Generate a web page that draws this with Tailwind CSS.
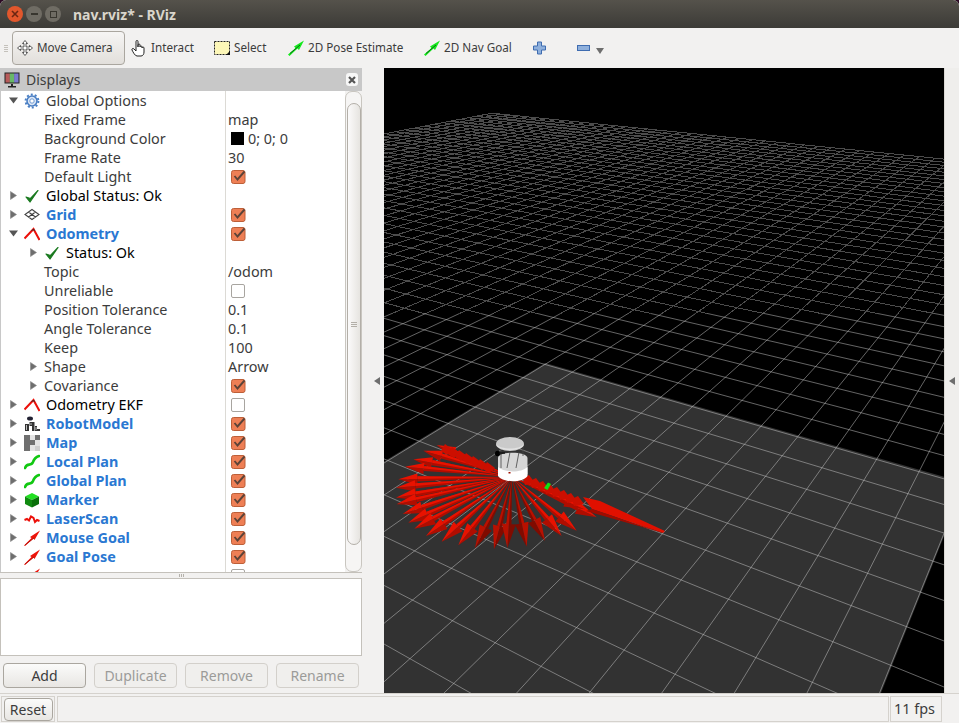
<!DOCTYPE html>
<html lang="en">

<head>
    <meta charset="UTF-8">
    <title>nav.rviz* - RViz</title>
    <script src="https://cdn.jsdelivr.net/npm/@tailwindcss/browser@4"></script>
</head>

<body class="bg-[#2c0a24] h-[723px] w-[959px] overflow-hidden font-['Noto_Sans',sans-serif] text-[14px] text-[#3c3c3c]">
    <!-- shared icons -->
    <svg class="hidden">
        <symbol id="i-right" viewBox="0 0 9 9"><path d="M1.5 0.5 L7.5 4.5 L1.5 8.5 Z" fill="#6e6e6e" stroke="#8a8a8a" stroke-width="0.6"/></symbol>
        <symbol id="i-down" viewBox="0 0 9 9"><path d="M0 1.5 L9 1.5 L4.5 7.5 Z" fill="#555"/></symbol>
        <symbol id="i-check" viewBox="0 0 16 16"><path d="M2 9 L6 14 L14 2.5 L6.5 10.5 Z" fill="#1b7a20" stroke="#1b7a20" stroke-width="1.2" stroke-linejoin="round"/></symbol>
        <symbol id="i-gear" viewBox="0 0 16 16"><circle cx="8" cy="8" r="5" fill="#dbe6f5" stroke="#4a7fc4" stroke-width="1.6"/><circle cx="8" cy="8" r="6.4" fill="none" stroke="#4a7fc4" stroke-width="2" stroke-dasharray="2 2.02"/><circle cx="8" cy="8" r="2.2" fill="#fff" stroke="#6d9ad4"/></symbol>
        <symbol id="i-grid" viewBox="0 0 16 16"><path d="M8 2.5 L15 7.5 L8 12.5 L1 7.5 Z M4.5 5 L11.5 10 M11.5 5 L4.5 10" fill="none" stroke="#444" stroke-width="1.1"/></symbol>
        <symbol id="i-odom" viewBox="0 0 16 16"><path d="M0.5 12.5 L9.5 3 L15.5 14" fill="none" stroke="#ec100a" stroke-width="2"/><path d="M7.5 5 L9.5 3 L10.5 5" fill="none" stroke="#333" stroke-width="1"/></symbol>
        <symbol id="i-robot" viewBox="0 0 16 16"><ellipse cx="6" cy="2.5" rx="3" ry="2" fill="#223"/><path d="M1 8 H5 V15 H1 Z M5.5 6 H10.5 V15 H8 V10 H5.5 Z M11 10 H13 V13 H16 V15 H11 Z" fill="#333"/><path d="M2.5 9 V14 M12 11 V14 M7 7 V9" stroke="#ccc" stroke-width="0.9"/></symbol>
        <symbol id="i-map" viewBox="0 0 16 16"><rect width="16" height="16" fill="#e4e4e4"/><path d="M0 0 H6 V5 H11 V0 H16 V5 H11 V10 H6 V16 H0 Z" fill="#707070"/><path d="M11 11 H16 V16 H11 Z" fill="#cfcfcf"/></symbol>
        <symbol id="i-path" viewBox="0 0 16 16"><path d="M1 14 C3 8 7 13 9 8 C10 5 12 3 15 2" fill="none" stroke="#12c812" stroke-width="2.6" stroke-linecap="round"/></symbol>
        <symbol id="i-cube" viewBox="0 0 16 16"><path d="M8 1 L15 4.5 L8 8 L1 4.5 Z" fill="#22e022"/><path d="M1 4.5 L8 8 L8 15.5 L1 12 Z" fill="#108a10"/><path d="M15 4.5 L8 8 L8 15.5 L15 12 Z" fill="#0a700a"/></symbol>
        <symbol id="i-laser" viewBox="0 0 16 16"><path d="M0.5 9 L3 8 L5 9.5 L7 5.5 L9.5 7 L11 11 L13 9 L15.5 10" fill="none" stroke="#ec100a" stroke-width="2"/></symbol>
        <symbol id="i-pose" viewBox="0 0 16 16"><path d="M0 15.5 L7.5 8 L6 7 L16 0.5 L10.5 10 L9.5 8.5 L1 16 Z" fill="#ec140a"/><path d="M1 15 L10 8" stroke="#a80c06" stroke-width="0.8"/></symbol>
        <symbol id="i-green" viewBox="0 0 16 16"><path d="M0 14.5 L7.5 8 L6 6.5 L16 0.5 L11 10 L9.5 8.5 L1.5 16 Z" fill="#14e81c"/><path d="M2 13.5 L12 5" stroke="#0a5a12" stroke-width="0.9"/></symbol>
        <symbol id="i-box-on" viewBox="0 0 15 15"><rect x="0.5" y="1.5" width="13.5" height="13" rx="2" fill="#ee7f55" stroke="#bd5f38"/><path d="M3.5 7 L6.5 10.5 L13.5 2.5" fill="none" stroke="#5c4338" stroke-width="1.9"/></symbol>
    </svg>

    <div class="flex h-full w-full flex-col overflow-hidden rounded-t-[6px] bg-[#f2f1f0]">
        <!-- Title bar -->
        <div class="flex h-[28px] shrink-0 items-center bg-gradient-to-b from-[#55524b] to-[#3c3b37]">
            <div class="ml-[7px] flex w-[66px] items-center gap-[3px]">
                <span class="flex h-[16px] w-[16px] items-center justify-center rounded-full bg-[#e2572c] text-[#5a2010]">
                    <svg class="h-[8px] w-[8px]" viewBox="0 0 8 8"><path d="M1 1 L7 7 M7 1 L1 7" stroke="#6b2612" stroke-width="1.6"/></svg>
                </span>
                <span class="flex h-[16px] w-[16px] items-center justify-center rounded-full bg-[#6f6c64]"><span class="h-[2px] w-[7px] bg-[#38362f]"></span></span>
                <span class="flex h-[16px] w-[16px] items-center justify-center rounded-full bg-[#6f6c64]"><span class="h-[7px] w-[7px] border border-[#38362f]"></span></span>
            </div>
            <span class="text-[14px] font-bold text-[#d9d5cb]">nav.rviz* - RViz</span>
        </div>

        <!-- Toolbar -->
        <div class="flex h-[40px] shrink-0 items-center pl-[4px] text-[11.7px]">
            <span class="mr-[4px] flex w-[4px] flex-col gap-[1px]">
                <span class="h-[1px] bg-[#c4c1bb]"></span><span class="h-[1px] bg-[#c4c1bb]"></span><span class="h-[1px] bg-[#c4c1bb]"></span><span class="h-[1px] bg-[#c4c1bb]"></span>
            </span>
            <div class="flex h-[34px] w-[113px] items-center rounded-[4px] border border-[#aaa69f] bg-gradient-to-b from-[#f6f5f4] to-[#e2dfdb] pl-[4px]">
                <svg class="h-[16px] w-[16px]" viewBox="0 0 16 16"><path d="M8 0.5 L10.5 3.5 H9 V7 H12.5 V5.5 L15.5 8 L12.5 10.5 V9 H9 V12.5 H10.5 L8 15.5 L5.5 12.5 H7 V9 H3.5 V10.5 L0.5 8 L3.5 5.5 V7 H7 V3.5 H5.5 Z" fill="#fff" stroke="#333" stroke-width="0.8"/></svg>
                <span class="ml-[4px]">Move Camera</span>
            </div>
            <svg class="ml-[6px] h-[18px] w-[16px]" viewBox="0 0 16 18"><path d="M5 10 V2.5 a1 1 0 0 1 2 0 V8 V6 a1 1 0 0 1 2 0 V8 a1 1 0 0 1 2 0 V9 a1 1 0 0 1 2 0 V13 C13 15 12 17 10 17 H6 C4 17 2 13 1 11 C0.5 9.5 2 9 3 10 L5 12 Z" fill="#fff" stroke="#222" stroke-width="1"/></svg>
            <span class="ml-[4px] w-[63px]">Interact</span>
            <svg class="h-[14px] w-[16px]" viewBox="0 0 16 14"><rect x="0.5" y="0.5" width="15" height="13" fill="#fdf7b8" stroke="#222" stroke-dasharray="2 1"/><path d="M12 14 H16 V10 Z" fill="#111"/></svg>
            <span class="ml-[4px] w-[54px]">Select</span>
            <svg class="h-[16px] w-[16px]"><use href="#i-green"/></svg>
            <span class="ml-[4px] w-[116px]">2D Pose Estimate</span>
            <svg class="h-[16px] w-[16px]"><use href="#i-green"/></svg>
            <span class="ml-[4px] w-[89px]">2D Nav Goal</span>
            <svg class="h-[14px] w-[13px]" viewBox="0 0 13 14"><path d="M4.5 1 H8.5 V5 H12.5 V9 H8.5 V13 H4.5 V9 H0.5 V5 H4.5 Z" fill="#8fb0dc" stroke="#3f6cb0"/></svg>
            <svg class="ml-[31px] h-[6px] w-[13px]" viewBox="0 0 13 6"><rect x="0.5" y="0.5" width="12" height="5" fill="#8fb0dc" stroke="#3f6cb0"/></svg>
            <svg class="ml-[6px] mt-[6px] h-[6px] w-[8px]" viewBox="0 0 8 6"><path d="M0 0 H8 L4 6 Z" fill="#6e6e6e"/></svg>
        </div>

        <!-- Main area -->
        <div class="flex h-[625px] shrink-0">
            <!-- Left dock -->
            <div class="flex w-[362px] shrink-0 flex-col">
                <div class="flex h-[23px] shrink-0 items-center justify-between bg-[#c8c8c8] pl-[4px] pr-[4px]">
                    <div class="flex items-center">
                        <svg class="h-[16px] w-[16px]" viewBox="0 0 16 16">
                            <rect x="0.5" y="0.5" width="15" height="11" fill="#222"/>
                            <rect x="1.5" y="1.5" width="4.4" height="9" fill="#b85a5a"/><rect x="5.8" y="1.5" width="4.4" height="9" fill="#68b868"/><rect x="10.1" y="1.5" width="4.4" height="9" fill="#7a7ad0"/>
                            <path d="M7 12 H9 V14 H12 V15.5 H4 V14 H7 Z" fill="#222"/>
                        </svg>
                        <span class="ml-[6px] text-[14px]">Displays</span>
                    </div>
                    <span class="flex h-[13px] w-[12px] items-center justify-center rounded-[3px] bg-[#f7f7f7]">
                        <svg class="h-[8px] w-[8px]" viewBox="0 0 8 8"><path d="M1 1 L7 7 M7 1 L1 7" stroke="#555" stroke-width="2.2"/></svg>
                    </span>
                </div>

                <div class="flex h-[481px] shrink-0 border-l border-[#c8c8c8]">
                    <div class="h-full w-[344px] shrink-0 overflow-hidden bg-white text-[14.4px] leading-[18px]" id="tree">
                        <div class="flex h-[19px] items-center"><div class="flex h-full w-[224px] shrink-0 items-center pl-[8px]"><svg class="h-[9px] w-[9px]"><use href="#i-down"/></svg><svg class="ml-[6px] h-[16px] w-[16px]"><use href="#i-gear"/></svg><span class="ml-[6px]">Global Options</span></div><div class="h-full grow border-l border-[#dcdad5]"></div></div>
                        <div class="flex h-[19px] items-center"><div class="flex h-full w-[224px] shrink-0 items-center pl-[43px]">Fixed Frame</div><div class="flex h-full grow items-center border-l border-[#dcdad5] pl-[2px]">map</div></div>
                        <div class="flex h-[19px] items-center"><div class="flex h-full w-[224px] shrink-0 items-center pl-[43px]">Background Color</div><div class="flex h-full grow items-center border-l border-[#dcdad5] pl-[5px]"><span class="h-[13px] w-[13px] bg-black"></span><span class="ml-[4px]">0; 0; 0</span></div></div>
                        <div class="flex h-[19px] items-center"><div class="flex h-full w-[224px] shrink-0 items-center pl-[43px]">Frame Rate</div><div class="flex h-full grow items-center border-l border-[#dcdad5] pl-[2px]">30</div></div>
                        <div class="flex h-[19px] items-center"><div class="flex h-full w-[224px] shrink-0 items-center pl-[43px]">Default Light</div><div class="flex h-full grow items-center border-l border-[#dcdad5] pl-[5px]"><svg class="h-[15px] w-[15px]"><use href="#i-box-on"/></svg></div></div>
                        <div class="flex h-[19px] items-center"><div class="flex h-full w-[224px] shrink-0 items-center pl-[8px] text-black"><svg class="h-[9px] w-[9px]"><use href="#i-right"/></svg><svg class="ml-[6px] h-[16px] w-[16px]"><use href="#i-check"/></svg><span class="ml-[6px]">Global Status: Ok</span></div><div class="h-full grow border-l border-[#dcdad5]"></div></div>
                        <div class="flex h-[19px] items-center"><div class="flex h-full w-[224px] shrink-0 items-center pl-[8px] font-bold text-[#2a78d2]"><svg class="h-[9px] w-[9px]"><use href="#i-right"/></svg><svg class="ml-[6px] h-[16px] w-[16px]"><use href="#i-grid"/></svg><span class="ml-[6px]">Grid</span></div><div class="flex h-full grow items-center border-l border-[#dcdad5] pl-[5px]"><svg class="h-[15px] w-[15px]"><use href="#i-box-on"/></svg></div></div>
                        <div class="flex h-[19px] items-center"><div class="flex h-full w-[224px] shrink-0 items-center pl-[8px] font-bold text-[#2a78d2]"><svg class="h-[9px] w-[9px]"><use href="#i-down"/></svg><svg class="ml-[6px] h-[16px] w-[16px]"><use href="#i-odom"/></svg><span class="ml-[6px]">Odometry</span></div><div class="flex h-full grow items-center border-l border-[#dcdad5] pl-[5px]"><svg class="h-[15px] w-[15px]"><use href="#i-box-on"/></svg></div></div>
                        <div class="flex h-[19px] items-center"><div class="flex h-full w-[224px] shrink-0 items-center pl-[28px] text-black"><svg class="h-[9px] w-[9px]"><use href="#i-right"/></svg><svg class="ml-[6px] h-[16px] w-[16px]"><use href="#i-check"/></svg><span class="ml-[6px]">Status: Ok</span></div><div class="h-full grow border-l border-[#dcdad5]"></div></div>
                        <div class="flex h-[19px] items-center"><div class="flex h-full w-[224px] shrink-0 items-center pl-[43px]">Topic</div><div class="flex h-full grow items-center border-l border-[#dcdad5] pl-[2px]">/odom</div></div>
                        <div class="flex h-[19px] items-center"><div class="flex h-full w-[224px] shrink-0 items-center pl-[43px]">Unreliable</div><div class="flex h-full grow items-center border-l border-[#dcdad5] pl-[5px]"><span class="h-[14px] w-[14px] rounded-[2px] border border-[#a8a5a0] bg-white"></span></div></div>
                        <div class="flex h-[19px] items-center"><div class="flex h-full w-[224px] shrink-0 items-center pl-[43px]">Position Tolerance</div><div class="flex h-full grow items-center border-l border-[#dcdad5] pl-[2px]">0.1</div></div>
                        <div class="flex h-[19px] items-center"><div class="flex h-full w-[224px] shrink-0 items-center pl-[43px]">Angle Tolerance</div><div class="flex h-full grow items-center border-l border-[#dcdad5] pl-[2px]">0.1</div></div>
                        <div class="flex h-[19px] items-center"><div class="flex h-full w-[224px] shrink-0 items-center pl-[43px]">Keep</div><div class="flex h-full grow items-center border-l border-[#dcdad5] pl-[2px]">100</div></div>
                        <div class="flex h-[19px] items-center"><div class="flex h-full w-[224px] shrink-0 items-center pl-[28px]"><svg class="h-[9px] w-[9px]"><use href="#i-right"/></svg><span class="ml-[6px]">Shape</span></div><div class="flex h-full grow items-center border-l border-[#dcdad5] pl-[2px]">Arrow</div></div>
                        <div class="flex h-[19px] items-center"><div class="flex h-full w-[224px] shrink-0 items-center pl-[28px]"><svg class="h-[9px] w-[9px]"><use href="#i-right"/></svg><span class="ml-[6px]">Covariance</span></div><div class="flex h-full grow items-center border-l border-[#dcdad5] pl-[5px]"><svg class="h-[15px] w-[15px]"><use href="#i-box-on"/></svg></div></div>
                        <div class="flex h-[19px] items-center"><div class="flex h-full w-[224px] shrink-0 items-center pl-[8px] text-black"><svg class="h-[9px] w-[9px]"><use href="#i-right"/></svg><svg class="ml-[6px] h-[16px] w-[16px]"><use href="#i-odom"/></svg><span class="ml-[6px]">Odometry EKF</span></div><div class="flex h-full grow items-center border-l border-[#dcdad5] pl-[5px]"><span class="h-[14px] w-[14px] rounded-[2px] border border-[#a8a5a0] bg-white"></span></div></div>
                        <div class="flex h-[19px] items-center"><div class="flex h-full w-[224px] shrink-0 items-center pl-[8px] font-bold text-[#2a78d2]"><svg class="h-[9px] w-[9px]"><use href="#i-right"/></svg><svg class="ml-[6px] h-[16px] w-[16px]"><use href="#i-robot"/></svg><span class="ml-[6px]">RobotModel</span></div><div class="flex h-full grow items-center border-l border-[#dcdad5] pl-[5px]"><svg class="h-[15px] w-[15px]"><use href="#i-box-on"/></svg></div></div>
                        <div class="flex h-[19px] items-center"><div class="flex h-full w-[224px] shrink-0 items-center pl-[8px] font-bold text-[#2a78d2]"><svg class="h-[9px] w-[9px]"><use href="#i-right"/></svg><svg class="ml-[6px] h-[16px] w-[16px]"><use href="#i-map"/></svg><span class="ml-[6px]">Map</span></div><div class="flex h-full grow items-center border-l border-[#dcdad5] pl-[5px]"><svg class="h-[15px] w-[15px]"><use href="#i-box-on"/></svg></div></div>
                        <div class="flex h-[19px] items-center"><div class="flex h-full w-[224px] shrink-0 items-center pl-[8px] font-bold text-[#2a78d2]"><svg class="h-[9px] w-[9px]"><use href="#i-right"/></svg><svg class="ml-[6px] h-[16px] w-[16px]"><use href="#i-path"/></svg><span class="ml-[6px]">Local Plan</span></div><div class="flex h-full grow items-center border-l border-[#dcdad5] pl-[5px]"><svg class="h-[15px] w-[15px]"><use href="#i-box-on"/></svg></div></div>
                        <div class="flex h-[19px] items-center"><div class="flex h-full w-[224px] shrink-0 items-center pl-[8px] font-bold text-[#2a78d2]"><svg class="h-[9px] w-[9px]"><use href="#i-right"/></svg><svg class="ml-[6px] h-[16px] w-[16px]"><use href="#i-path"/></svg><span class="ml-[6px]">Global Plan</span></div><div class="flex h-full grow items-center border-l border-[#dcdad5] pl-[5px]"><svg class="h-[15px] w-[15px]"><use href="#i-box-on"/></svg></div></div>
                        <div class="flex h-[19px] items-center"><div class="flex h-full w-[224px] shrink-0 items-center pl-[8px] font-bold text-[#2a78d2]"><svg class="h-[9px] w-[9px]"><use href="#i-right"/></svg><svg class="ml-[6px] h-[16px] w-[16px]"><use href="#i-cube"/></svg><span class="ml-[6px]">Marker</span></div><div class="flex h-full grow items-center border-l border-[#dcdad5] pl-[5px]"><svg class="h-[15px] w-[15px]"><use href="#i-box-on"/></svg></div></div>
                        <div class="flex h-[19px] items-center"><div class="flex h-full w-[224px] shrink-0 items-center pl-[8px] font-bold text-[#2a78d2]"><svg class="h-[9px] w-[9px]"><use href="#i-right"/></svg><svg class="ml-[6px] h-[16px] w-[16px]"><use href="#i-laser"/></svg><span class="ml-[6px]">LaserScan</span></div><div class="flex h-full grow items-center border-l border-[#dcdad5] pl-[5px]"><svg class="h-[15px] w-[15px]"><use href="#i-box-on"/></svg></div></div>
                        <div class="flex h-[19px] items-center"><div class="flex h-full w-[224px] shrink-0 items-center pl-[8px] font-bold text-[#2a78d2]"><svg class="h-[9px] w-[9px]"><use href="#i-right"/></svg><svg class="ml-[6px] h-[16px] w-[16px]"><use href="#i-pose"/></svg><span class="ml-[6px]">Mouse Goal</span></div><div class="flex h-full grow items-center border-l border-[#dcdad5] pl-[5px]"><svg class="h-[15px] w-[15px]"><use href="#i-box-on"/></svg></div></div>
                        <div class="flex h-[19px] items-center"><div class="flex h-full w-[224px] shrink-0 items-center pl-[8px] font-bold text-[#2a78d2]"><svg class="h-[9px] w-[9px]"><use href="#i-right"/></svg><svg class="ml-[6px] h-[16px] w-[16px]"><use href="#i-pose"/></svg><span class="ml-[6px]">Goal Pose</span></div><div class="flex h-full grow items-center border-l border-[#dcdad5] pl-[5px]"><svg class="h-[15px] w-[15px]"><use href="#i-box-on"/></svg></div></div>
                        <div class="flex h-[19px] items-start"><div class="flex h-full w-[224px] shrink-0 items-center pl-[23px]"><svg class="h-[16px] w-[16px]"><use href="#i-pose"/></svg></div><div class="flex h-full grow items-center border-l border-[#dcdad5] pl-[5px]"><span class="h-[14px] w-[14px] rounded-[2px] border border-[#a8a5a0] bg-white"></span></div></div>
                    </div>
                    <!-- Scrollbar -->
                    <div class="flex h-full w-[17px] shrink-0 flex-col items-center rounded-[7px] border border-[#c9c6c0] bg-[#f6f5f4] pt-[11px]">
                        <div class="flex h-[442px] w-[14px] items-center justify-center rounded-[7px] border border-[#b3afa8] bg-gradient-to-r from-[#fbfafa] to-[#e6e4e0]">
                            <span class="flex flex-col gap-[1px]"><span class="h-[1px] w-[6px] bg-[#b3afa8]"></span><span class="h-[1px] w-[6px] bg-[#b3afa8]"></span><span class="h-[1px] w-[6px] bg-[#b3afa8]"></span></span>
                        </div>
                    </div>
                </div>

                <!-- Splitter handle -->
                <div class="flex h-[6px] shrink-0 items-center justify-center gap-[1px] border-t border-[#c4c1bb]">
                    <span class="h-[3px] w-[1px] bg-[#b5b2ac]"></span><span class="h-[3px] w-[1px] bg-[#b5b2ac]"></span><span class="h-[3px] w-[1px] bg-[#b5b2ac]"></span>
                </div>
                <div class="h-[78px] w-[362px] shrink-0 border border-[#c4c1bb] bg-white"></div>

                <!-- Buttons -->
                <div class="flex gap-[8px] pl-[3px] pt-[7px]">
                    <button class="h-[25px] w-[83px] rounded-[4px] border border-[#aaa69f] bg-gradient-to-b from-[#fbfbfa] to-[#e8e6e3]">Add</button>
                    <button class="h-[25px] w-[83px] rounded-[4px] border border-[#d3d0cb] bg-[#f0efed] text-[#9b9b99]">Duplicate</button>
                    <button class="h-[25px] w-[83px] rounded-[4px] border border-[#d3d0cb] bg-[#f0efed] text-[#9b9b99]">Remove</button>
                    <button class="h-[25px] w-[83px] rounded-[4px] border border-[#d3d0cb] bg-[#f0efed] text-[#9b9b99]">Rename</button>
                </div>
            </div>

            <!-- Collapse strip -->
            <div class="flex w-[22px] shrink-0 items-center justify-center pl-[8px]">
                <svg class="h-[8px] w-[6px]" viewBox="0 0 6 8"><path d="M6 0 V8 L0 4 Z" fill="#6e6e6e"/></svg>
            </div>

            <!-- 3D view -->
            <div class="relative h-full w-[560px] shrink-0 overflow-hidden bg-black">
                <svg class="absolute inset-0 h-full w-full" viewBox="384 68 560 625">
                    <polygon id="mapPlane" fill="#323232"/>
                    <path id="gridNear" fill="none" stroke="#c8c8c8" stroke-opacity="0.5" stroke-width="1"/>
                    <path id="gridFar" fill="none" stroke="#989898" stroke-opacity="0.5" stroke-width="1" shape-rendering="crispEdges"/>
                    <g id="fan"></g>
                    <!-- robot -->
                    <path d="M498 458 C498 451 527 451 527.5 458 V474 C523 482 503 482 498 474 Z" fill="#d6d6d6"/>
                    <path d="M498 467 C505 473 521 473 527.5 467 V476 C523 483 503 483 498 476 Z" fill="#fff"/>
                    <path d="M501 444 V468 M523 446 V456 M510 452 L507 468 M519 452 L516 468" stroke="#444" stroke-width="0.8" fill="none"/>
                    <ellipse cx="497.5" cy="453.5" rx="2.5" ry="2.8" fill="#000"/>
                    <path d="M499 453 H505" stroke="#111" stroke-width="1.4"/>
                    <ellipse cx="510" cy="444" rx="14" ry="7" fill="#cacaca"/>
                    <path d="M496 444 C498 452 522 452 524 444 C520 450 500 450 496 444 Z" fill="#e2e2e2"/>
                    <rect x="508.5" y="472" width="2" height="1.5" fill="#a01000"/>
                    <!-- marker -->
                    <path d="M544 488 L548 482.5 L551 484 L547.5 490 Z" fill="#12e012"/>
                </svg>
            </div>

            <!-- Right strip -->
            <div class="flex w-[15px] shrink-0 items-center justify-center border-l border-[#dbd9d4] bg-[#efeeec]">
                <svg class="h-[8px] w-[6px]" viewBox="0 0 6 8"><path d="M6 0 V8 L0 4 Z" fill="#6e6e6e"/></svg>
            </div>
        </div>

        <!-- Status bar -->
        <div class="flex h-[30px] shrink-0 items-stretch border-t border-[#d5d2cd] pt-[2px] pl-[1px]">
            <div class="flex h-[26px] w-[54px] items-center justify-center border border-[#d5d2cd]">
                <button class="h-[23px] w-[49px] rounded-[4px] border border-[#aaa69f] bg-gradient-to-b from-[#fbfbfa] to-[#e8e6e3]">Reset</button>
            </div>
            <div class="ml-[2px] h-[26px] w-[832px] border border-[#d5d2cd]"></div>
            <div class="ml-[1px] flex h-[26px] w-[52px] items-center border border-[#d5d2cd] pl-[3px] text-[14.4px]">11 fps</div>
        </div>
    </div>

    <script>
        // ground plane to screen, fitted to the grid in the view
        const G = -0.03462, H = 0.05821, W_SPLIT = 2.0;
        function project(i, j) {
            const w = 1 + G * i + H * j;
            return [(495.2 + 27.07 * i + 67.87 * j) / w, (642.7 + 0.5539 * i - 0.931 * j) / w];
        }
        const fmt = p => p[0].toFixed(1) + ' ' + p[1].toFixed(1);
        const seg = (a, b) => 'M' + fmt(a) + 'L' + fmt(b);

        // far part of the grid is drawn aliased like the GL view, near part smooth
        let near = '', far = '';
        for (let i = -41; i <= 59; i++) {
            const jMin = Math.max(-54, (0.3 - 1 - G * i) / H);
            const jCut = Math.min(46, Math.max(jMin, (W_SPLIT - 1 - G * i) / H));
            if (jCut > jMin) near += seg(project(i, jMin), project(i, jCut));
            if (jCut < 46) far += seg(project(i, jCut), project(i, 46));
        }
        for (let j = -54; j <= 46; j++) {
            const iMax = Math.min(59, (0.3 - 1 - H * j) / G);
            const iCut = Math.max(-41, Math.min(iMax, (W_SPLIT - 1 - H * j) / G));
            if (iCut < iMax) near += seg(project(iCut, j), project(iMax, j));
            if (iCut > -41) far += seg(project(-41, j), project(iCut, j));
        }
        document.getElementById('gridNear').setAttribute('d', near);
        document.getElementById('gridFar').setAttribute('d', far);

        const plane = [[-6.05, 9.08], [6.02, 9.08], [6.02, -8], [-6.05, -8]];
        document.getElementById('mapPlane').setAttribute('points', plane.map(c => project(c[0], c[1]).join(',')).join(' '));

        // laser arrows, tips in px relative to the fan corner
        const tips = [[170, 75], [130, 92], [100, 118], [75, 140], [55, 178], [48, 203], [48, 233], [50, 253], [68, 282], [85, 308],
            [103, 326], [138, 348], [185, 365], [235, 376], [285, 385], [342, 388], [382, 384], [440, 380], [495, 363], [545, 348], [590, 332], [650, 292], [615, 268]];
        const ox = 512, oy = 477;
        let fan = '';
        tips.forEach(t => {
            const tx = 380 + t[0] / 3, ty = 420 + t[1] / 3;
            const len = Math.hypot(tx - ox, ty - oy), dx = (tx - ox) / len, dy = (ty - oy) / len;
            let nx = -dy, ny = dx;
            if (ny > 0 || (ny === 0 && nx < 0)) { nx = -nx; ny = -ny; }
            const hl = 19 + 5 * Math.max(dy, 0), hw = 5.5 + 1.5 * Math.max(dy, 0);
            const bx = tx - dx * hl, by = ty - dy * hl;
            const light = dy > 0.8 ? '#b81000' : '#e81200', dark = dy > 0.8 ? '#800b00' : '#b00d00';
            const sw = 2.6;
            fan += `<polygon points="${ox},${oy} ${bx + nx * sw},${by + ny * sw} ${bx - nx * sw},${by - ny * sw}" fill="${dark}"/>`;
            fan += `<polygon points="${ox},${oy} ${bx + nx * sw},${by + ny * sw} ${bx},${by}" fill="${light}"/>`;
            fan += `<polygon points="${bx - nx * hw},${by - ny * hw} ${tx},${ty} ${bx},${by}" fill="${dark}"/>`;
            fan += `<polygon points="${bx + nx * hw},${by + ny * hw} ${tx},${ty} ${bx},${by}" fill="${light}"/>`;
        });
        // long arrow along the x axis, with the overlapping heads on its way
        [[527, 480], [534, 483], [541, 486], [548, 489], [555, 492], [562, 495], [569, 498], [576, 501]].forEach(c => {
            fan += `<polygon points="${c[0] + 8},${c[1] + 3} ${c[0] + 2},${c[1] - 5} ${c[0] - 4},${c[1] - 2} ${c[0] - 2},${c[1] + 5}" fill="#cc0f00"/>`;
        });
        fan += '<polygon points="583,497 600,501 665,531 663,533 592,509" fill="#e01000"/><polygon points="592,509 663,533 586,511" fill="#a00c00"/>';
        // same kind of chain on the upper left arrows
        [[445, 449], [452, 452], [459, 455], [466, 458], [473, 461], [480, 464], [487, 467]].forEach(c => {
            fan += `<polygon points="${c[0] + 8},${c[1] + 1} ${c[0] + 2},${c[1] + 6} ${c[0] - 4},${c[1] + 2} ${c[0]},${c[1] - 5}" fill="#cc0f00"/>`;
        });
        document.getElementById('fan').innerHTML = fan;
    </script>
</body>

</html>
